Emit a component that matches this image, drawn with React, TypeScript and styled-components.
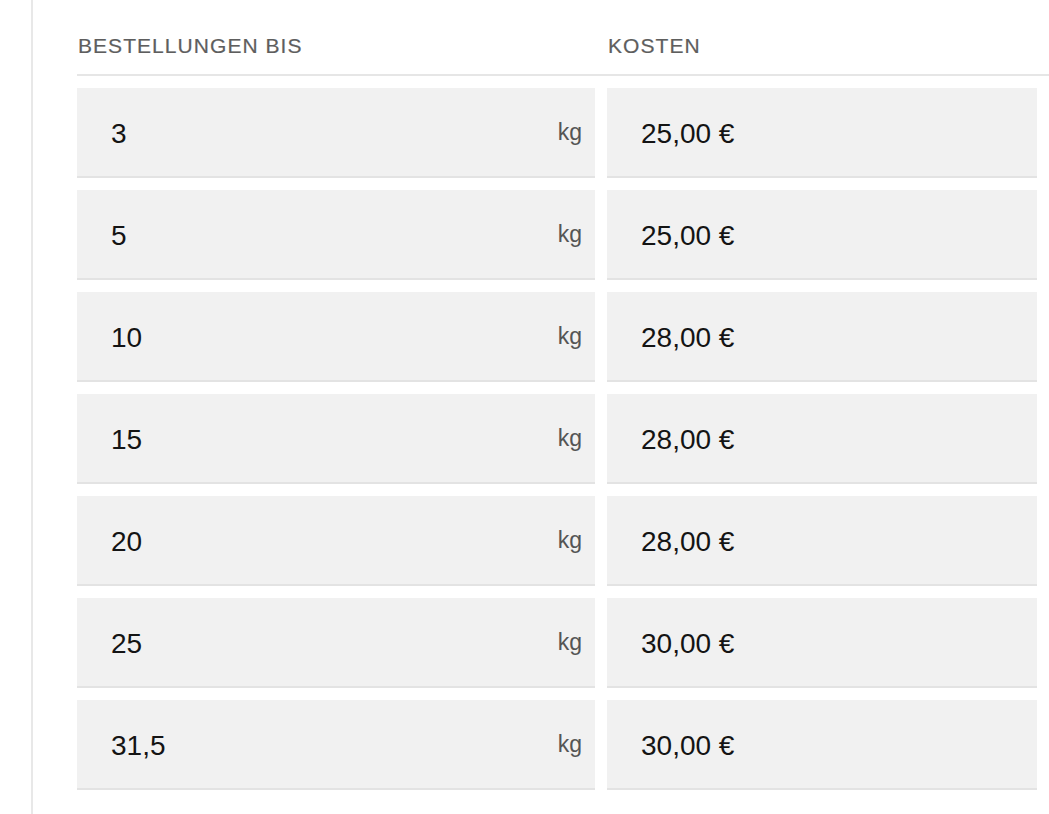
import React from 'react';
import styled, {createGlobalStyle} from 'styled-components';

const GlobalStyle = createGlobalStyle`
  html, body {
    margin: 0;
    padding: 0;
    background: #ffffff;
    font-family: "Liberation Sans", Arial, Helvetica, sans-serif;
  }
`;

const Page = styled.div`
  padding-left: 31px;
  min-height: 100vh;
  box-sizing: border-box;
  overflow: hidden;
`;

const Frame = styled.div`
  border-left: 2px solid #e8e8e8;
  padding-left: 44px;
  min-height: 100vh;
  box-sizing: border-box;
`;

const Table = styled.div`
  display: flex;
  flex-direction: column;
`;

const HeaderRow = styled.div`
  display: grid;
  grid-template-columns: 518px 430px;
  column-gap: 12px;
  padding: 34px 0 16px;
  border-bottom: 2px solid #e6e6e6;
  margin-bottom: 12px;
`;

const HeaderCell = styled.div`
  font-size: 21px;
  line-height: 24px;
  letter-spacing: 0.05em;
  text-transform: uppercase;
  color: #5e5e5e;
  -webkit-text-stroke: 0.2px #5e5e5e;
  padding-left: ${({$indent}: {$indent?: number}) => $indent ?? 0}px;
`;

const Rows = styled.div`
  display: flex;
  flex-direction: column;
  gap: 12px;
`;

const Row = styled.div`
  display: grid;
  grid-template-columns: 518px 430px;
  column-gap: 12px;
`;

const Cell = styled.div`
  display: flex;
  align-items: flex-start;
  justify-content: space-between;
  height: 90px;
  box-sizing: border-box;
  padding: 30px 12px 0 34px;
  background: #f1f1f1;
  border-bottom: 2px solid #e3e3e3;
`;

const Value = styled.span`
  font-size: 28px;
  line-height: 32px;
  color: #141414;
`;

const Unit = styled.span`
  font-size: 23px;
  line-height: 28px;
  color: #555555;
  margin-right: 1px;
`;

const rates = [
  {weight: '3', cost: '25,00 €'},
  {weight: '5', cost: '25,00 €'},
  {weight: '10', cost: '28,00 €'},
  {weight: '15', cost: '28,00 €'},
  {weight: '20', cost: '28,00 €'},
  {weight: '25', cost: '30,00 €'},
  {weight: '31,5', cost: '30,00 €'},
];

const App = () => {
  return (
    <>
      <GlobalStyle />
      <Page>
        <Frame>
          <Table>
            <HeaderRow>
              <HeaderCell $indent={1}>Bestellungen bis</HeaderCell>
              <HeaderCell $indent={1}>Kosten</HeaderCell>
            </HeaderRow>
            <Rows>
              {rates.map((rate) => (
                <Row key={rate.weight}>
                  <Cell>
                    <Value>{rate.weight}</Value>
                    <Unit>kg</Unit>
                  </Cell>
                  <Cell>
                    <Value>{rate.cost}</Value>
                  </Cell>
                </Row>
              ))}
            </Rows>
          </Table>
        </Frame>
      </Page>
    </>
  );
};

export default App;
